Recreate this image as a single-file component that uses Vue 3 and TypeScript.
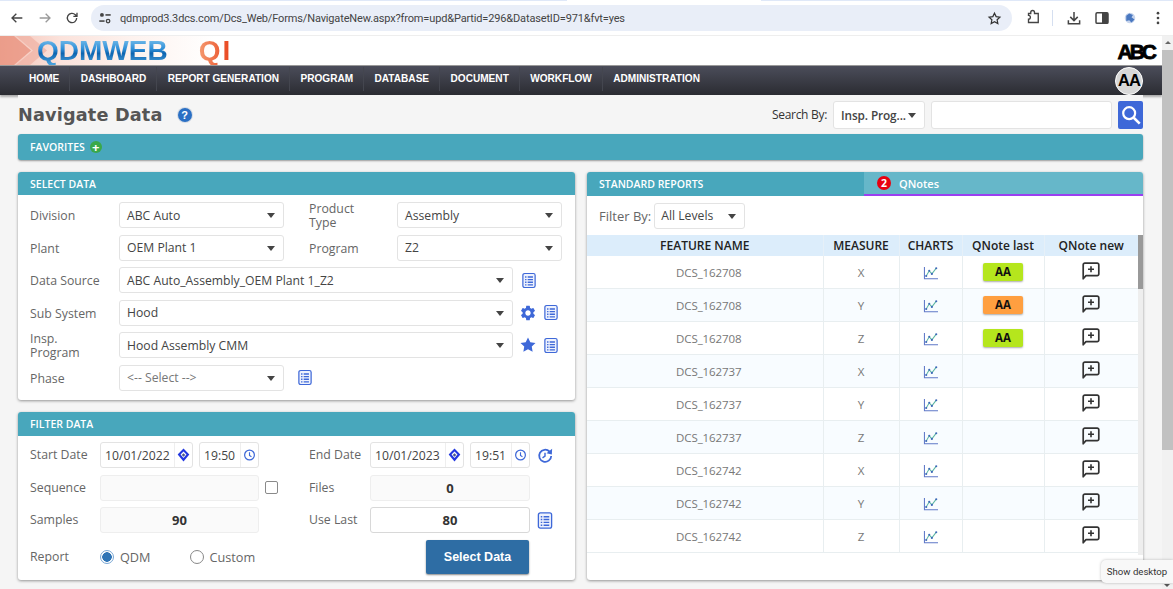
<script setup lang="ts">
interface Row {
  name: string
  measure: string
  last: string
}

const navItems = ['HOME', 'DASHBOARD', 'REPORT GENERATION', 'PROGRAM', 'DATABASE', 'DOCUMENT', 'WORKFLOW', 'ADMINISTRATION']

const rows: Row[] = [
  { name: 'DCS_162708', measure: 'X', last: 'lime' },
  { name: 'DCS_162708', measure: 'Y', last: 'orange' },
  { name: 'DCS_162708', measure: 'Z', last: 'lime' },
  { name: 'DCS_162737', measure: 'X', last: '' },
  { name: 'DCS_162737', measure: 'Y', last: '' },
  { name: 'DCS_162737', measure: 'Z', last: '' },
  { name: 'DCS_162742', measure: 'X', last: '' },
  { name: 'DCS_162742', measure: 'Y', last: '' },
  { name: 'DCS_162742', measure: 'Z', last: '' }
]
</script>

<template>
  <div class="app">
    <svg class="defs" width="0" height="0">
      <symbol id="i-list" viewBox="0 0 16 18">
        <rect x="1" y="1" width="14" height="16" rx="2" fill="#eef2fd" stroke="#3e68d8" stroke-width="1.4" />
        <path d="M3.500 5h1.600M3.500 8h1.600M3.500 11h1.600M3.500 14h1.600M6.500 5h6M6.500 8h6M6.500 11h6M6.500 14h6" stroke="#3e68d8" stroke-width="1.500" fill="none" />
      </symbol>
      <symbol id="i-gear" viewBox="0 0 24 24">
        <path fill="#3e68d8" d="M19.14 12.94c.04-.3.06-.61.06-.94 0-.32-.02-.64-.07-.94l2.03-1.58a.49.49 0 0 0 .12-.61l-1.92-3.32a.488.488 0 0 0-.59-.22l-2.39.96c-.5-.38-1.03-.7-1.62-.94l-.36-2.54a.484.484 0 0 0-.48-.41h-3.84c-.24 0-.43.17-.47.41l-.36 2.54c-.59.24-1.13.57-1.62.94l-2.39-.96c-.22-.08-.47 0-.59.22L2.74 8.87c-.12.21-.08.47.12.61l2.03 1.58c-.05.3-.09.63-.09.94s.02.64.07.94l-2.03 1.58a.49.49 0 0 0-.12.61l1.92 3.32c.12.22.37.29.59.22l2.39-.96c.5.38 1.03.7 1.62.94l.36 2.54c.05.24.24.41.48.41h3.84c.24 0 .44-.17.47-.41l.36-2.54c.59-.24 1.13-.56 1.62-.94l2.39.96c.22.08.47 0 .59-.22l1.92-3.32c.12-.22.07-.47-.12-.61l-2.01-1.58zM12 15.6c-1.98 0-3.6-1.62-3.6-3.6s1.62-3.6 3.6-3.6 3.6 1.62 3.6 3.6-1.62 3.6-3.6 3.6z" />
      </symbol>
      <symbol id="i-star" viewBox="0 0 24 24">
        <path fill="#3e68d8" d="M12 2l3.09 6.26L22 9.27l-5 4.87 1.18 6.88L12 17.77l-6.18 3.25L7 14.14 2 9.27l6.91-1.01z" />
      </symbol>
      <symbol id="i-clock" viewBox="0 0 16 16">
        <circle cx="8" cy="8" r="6" fill="none" stroke="#3e68d8" stroke-width="1.500" />
        <path d="M8 4.500V8.500l2.400 1.600" fill="none" stroke="#3e68d8" stroke-width="1.400" />
      </symbol>
      <symbol id="i-spin" viewBox="0 0 16 18">
        <path d="M8 .5l7.500 8-7.500 9-7.500-9z" fill="#2338e0" />
        <path d="M8 4.500l3.800 4-3.800 4.500-3.800-4.500z" fill="#fff" />
        <path d="M5.800 9l2.200-2.200L10.300 9 8 11.400z" fill="#4a5a88" />
      </symbol>
      <symbol id="i-history" viewBox="0 0 18 18">
        <path d="M14 4.500A6.800 6.800 0 1 0 16 9.500" fill="none" stroke="#3e68d8" stroke-width="2" />
        <path d="M17 1.500l-.3 6.500-6-1.500z" fill="#3e68d8" />
        <path d="M9 5.800v4L6.200 11.600" fill="none" stroke="#3e68d8" stroke-width="1.600" />
      </symbol>
      <symbol id="i-chart" viewBox="0 0 18 16">
        <path d="M1.500 1v13.500H17" fill="none" stroke="#5f78c8" stroke-width="1.200" />
        <path d="M3.500 11.500L7 5.500l3 3.500 5-6.500" fill="none" stroke="#5fb8a4" stroke-width="1.200" />
        <circle cx="3.500" cy="11.500" r="1.200" fill="#3e68b8" />
        <circle cx="7" cy="5.500" r="1.200" fill="#3e68b8" />
        <circle cx="10" cy="9" r="1.200" fill="#3e68b8" />
        <circle cx="15" cy="2.500" r="1.200" fill="#3e68b8" />
      </symbol>
      <symbol id="i-note" viewBox="0 0 18 18">
        <path d="M2.800 1.200h12.400a1.600 1.600 0 0 1 1.600 1.600v9.200a1.600 1.600 0 0 1-1.600 1.600H4L1.200 16.800V2.800a1.600 1.600 0 0 1 1.600-1.600z" fill="none" stroke="#333" stroke-width="1.700" stroke-linejoin="round" />
        <path d="M9 4.200v6M6 7.200h6" stroke="#333" stroke-width="1.600" fill="none" />
      </symbol>
    </svg>

    <div class="tabline"><span class="tl-a"></span><span class="tl-b"></span></div>
    <header class="browser">
      <svg class="b-icon" viewBox="0 0 24 24"><path d="M20 12H5M11 5.500L4.500 12l6.500 6.500" fill="none" stroke="#444" stroke-width="2" /></svg>
      <svg class="b-icon" viewBox="0 0 24 24"><path d="M4 12h15M13 5.500l6.500 6.500-6.500 6.500" fill="none" stroke="#9a9a9a" stroke-width="2" /></svg>
      <svg class="b-icon" viewBox="0 0 24 24"><path d="M19 12a7 7 0 1 1-2.100-5L19.500 9.500M19.500 4v5.500H14" fill="none" stroke="#444" stroke-width="2" /></svg>
      <div class="pill">
        <svg class="tune" viewBox="0 0 16 16">
          <circle cx="4.500" cy="4.500" r="2.200" fill="#444" /><path d="M8.500 4.500h6" stroke="#444" stroke-width="1.800" />
          <circle cx="11.500" cy="11.500" r="2" fill="none" stroke="#444" stroke-width="1.500" /><path d="M1.500 11.500h6" stroke="#444" stroke-width="1.800" />
        </svg>
        <span class="url">qdmprod3.3dcs.com/Dcs_Web/Forms/NavigateNew.aspx?from=upd&amp;Partid=296&amp;DatasetID=971&amp;fvt=yes</span>
        <svg class="pill-star" viewBox="0 0 24 24"><path d="M12 3.500l2.600 5.500 6 .8-4.400 4.200 1.100 6-5.300-2.900-5.300 2.900 1.100-6L3.400 9.800l6-.8z" fill="none" stroke="#333" stroke-width="2" /></svg>
      </div>
      <div class="b-right">
        <svg class="r-icon" viewBox="0 0 24 24"><path d="M9 5.500a2.500 2.500 0 0 1 5 0V7h5v12H6v-4.500a2.500 2.500 0 0 0 0-5V7h3z" transform="translate(0 -1)" fill="none" stroke="#444" stroke-width="1.800" /></svg>
        <span class="b-sep"></span>
        <svg class="r-icon" viewBox="0 0 24 24"><path d="M12 4v11M7 10.500l5 5 5-5M4.500 15v4.500h15V15" fill="none" stroke="#444" stroke-width="2" /></svg>
        <svg class="r-icon" viewBox="0 0 24 24"><rect x="4" y="5" width="16" height="14" rx="1.500" fill="none" stroke="#444" stroke-width="2" /><rect x="12" y="5" width="8" height="14" fill="#444" /></svg>
        <svg class="r-icon" viewBox="0 0 24 24"><circle cx="12" cy="12" r="7" fill="#c6d4ec" /><path d="M7 9l4-3 5 2-2 3 4 3-4 4-3-3-4 1z" fill="#4a78c0" /></svg>
        <svg class="r-icon" viewBox="0 0 24 24"><circle cx="12" cy="5.500" r="1.800" fill="#444" /><circle cx="12" cy="12" r="1.800" fill="#444" /><circle cx="12" cy="18.500" r="1.800" fill="#444" /></svg>
      </div>
    </header>

    <div class="viewport">
      <div class="site">
        <div class="logo-band">
          <svg class="chevrons" viewBox="0 0 70 29" width="70" height="29">
            <path d="M0 0h14l17 14.500L14 29H0z" fill="#e8907c" opacity=".75" />
            <path d="M16 0h14l17 14.500L30 29H16l17-14.500z" fill="#f0b1a2" opacity=".7" />
          </svg>
          <div class="logo"><span class="logo-a">QDMWEB</span><span class="logo-b">QI</span></div>
          <span class="abc">ABC</span>
        </div>

        <nav class="nav">
          <a v-for="item in navItems" :key="item" class="nav-item">{{ item }}</a>
          <span class="avatar">AA</span>
        </nav>

        <main class="page">
          <div class="title-row">
            <h1>Navigate Data</h1>
            <span class="help">?</span>
            <div class="search">
              <label>Search By:</label>
              <div class="select search-select"><span>Insp. Prog...</span><i class="caret"></i></div>
              <div class="plain search-input"></div>
              <button class="search-btn">
                <svg viewBox="0 0 24 24" width="22" height="22"><circle cx="10" cy="10" r="6.500" fill="none" stroke="#fff" stroke-width="2.400" /><path d="M15 15l6.500 6.500" stroke="#fff" stroke-width="2.800" /></svg>
              </button>
            </div>
          </div>

          <div class="favorites">FAVORITES <span class="plus">+</span></div>

          <div class="panels">
            <div class="left-col">
              <section class="card">
                <div class="card-head">SELECT DATA</div>
                <div class="form select-form">
                  <div class="row">
                    <label class="lbl">Division</label>
                    <div class="select w165"><span>ABC Auto</span><i class="caret"></i></div>
                    <label class="lbl lbl2 tight">Product Type</label>
                    <div class="select w165"><span>Assembly</span><i class="caret"></i></div>
                  </div>
                  <div class="row">
                    <label class="lbl">Plant</label>
                    <div class="select w165"><span>OEM Plant 1</span><i class="caret"></i></div>
                    <label class="lbl lbl2">Program</label>
                    <div class="select w165"><span>Z2</span><i class="caret"></i></div>
                  </div>
                  <div class="row">
                    <label class="lbl">Data Source</label>
                    <div class="select wide"><span>ABC Auto_Assembly_OEM Plant 1_Z2</span><i class="caret"></i></div>
                    <svg class="ico first"><use href="#i-list" /></svg>
                  </div>
                  <div class="row">
                    <label class="lbl">Sub System</label>
                    <div class="select wide"><span>Hood</span><i class="caret"></i></div>
                    <svg class="ico first big"><use href="#i-gear" /></svg>
                    <svg class="ico"><use href="#i-list" /></svg>
                  </div>
                  <div class="row">
                    <label class="lbl insp">Insp. Program</label>
                    <div class="select wide"><span>Hood Assembly CMM</span><i class="caret"></i></div>
                    <svg class="ico first big"><use href="#i-star" /></svg>
                    <svg class="ico"><use href="#i-list" /></svg>
                  </div>
                  <div class="row">
                    <label class="lbl">Phase</label>
                    <div class="select w165 muted"><span>&lt;-- Select --&gt;</span><i class="caret"></i></div>
                    <svg class="ico phase"><use href="#i-list" /></svg>
                  </div>
                </div>
              </section>

              <section class="card">
                <div class="card-head tall">FILTER DATA</div>
                <div class="form filter-form">
                  <div class="row">
                    <label class="lbl flbl">Start Date</label>
                    <div class="plain date"><span>10/01/2022</span><i class="addon"><svg class="mini"><use href="#i-spin" /></svg></i></div>
                    <div class="plain time"><span>19:50</span><i class="addon"><svg class="mini"><use href="#i-clock" /></svg></i></div>
                    <label class="lbl flbl2">End Date</label>
                    <div class="plain date"><span>10/01/2023</span><i class="addon"><svg class="mini"><use href="#i-spin" /></svg></i></div>
                    <div class="plain time"><span>19:51</span><i class="addon"><svg class="mini"><use href="#i-clock" /></svg></i></div>
                    <svg class="ico hist"><use href="#i-history" /></svg>
                  </div>
                  <div class="row">
                    <label class="lbl flbl">Sequence</label>
                    <div class="plain field off"></div>
                    <input class="check" type="checkbox" />
                    <label class="lbl flbl2 after-check">Files</label>
                    <div class="plain field off num">0</div>
                  </div>
                  <div class="row">
                    <label class="lbl flbl">Samples</label>
                    <div class="plain field off num">90</div>
                    <label class="lbl flbl2">Use Last</label>
                    <div class="plain field num strong">80</div>
                    <svg class="ico hist"><use href="#i-list" /></svg>
                  </div>
                  <div class="row report-row">
                    <label class="lbl flbl">Report</label>
                    <label class="radio first-radio"><input type="radio" name="rep" checked /> QDM</label>
                    <label class="radio"><input type="radio" name="rep" /> Custom</label>
                    <button class="primary">Select Data</button>
                  </div>
                </div>
              </section>
            </div>

            <section class="card reports">
              <div class="tabs">
                <div class="tab active">STANDARD REPORTS</div>
                <div class="tab qnotes"><span class="badge">2</span>QNotes</div>
              </div>
              <div class="filter-by">
                <label>Filter By:</label>
                <div class="select levels"><span>All Levels</span><i class="caret"></i></div>
              </div>
              <div class="table-wrap">
                <table>
                  <colgroup>
                    <col class="c-name" /><col class="c-measure" /><col class="c-charts" /><col class="c-last" /><col />
                  </colgroup>
                  <thead>
                    <tr>
                      <th>FEATURE NAME</th>
                      <th>MEASURE</th>
                      <th>CHARTS</th>
                      <th>QNote last</th>
                      <th>QNote new</th>
                    </tr>
                  </thead>
                  <tbody>
                    <tr v-for="(row, i) in rows" :key="i">
                      <td class="name">{{ row.name }}</td>
                      <td>{{ row.measure }}</td>
                      <td><svg class="chart"><use href="#i-chart" /></svg></td>
                      <td><span v-if="row.last" class="aa" :class="row.last">AA</span></td>
                      <td><svg class="note"><use href="#i-note" /></svg></td>
                    </tr>
                  </tbody>
                </table>
                <div class="t-scroll"><span></span></div>
              </div>
            </section>
          </div>
        </main>
      </div>

      <div class="scrollbar">
        <i class="arrow-up"></i>
        <span class="thumb"></span>
      </div>
    </div>

    <div class="tooltip">Show desktop</div>
    <i class="arrow-down"></i>
  </div>
</template>

<style scoped>
.app {
  position: relative;
  width: 1173px;
  height: 589px;
  overflow: hidden;
  background: #fff;
  font-family: "Open Sans", "Noto Sans", sans-serif;
  font-size: 12.300px;
  color: #666;
}
.defs {
  position: absolute;
}

/* browser chrome */
.tabline {
  display: flex;
  justify-content: space-between;
  height: 1px;
}
.tl-a {
  width: 567px;
  background: #dfe8f8;
}
.tl-b {
  width: 412px;
  background: #dfe8f8;
}
.browser {
  display: flex;
  align-items: center;
  height: 34px;
  padding-left: 4px;
  border-bottom: 1px solid #eee;
}
.b-icon {
  width: 16px;
  height: 16px;
  margin: 0 7px 0 5px;
  flex: none;
}
.browser > .b-icon:nth-of-type(2),
.browser > .b-icon:nth-of-type(3) {
  margin-left: 5px;
  margin-right: 6px;
}
.pill {
  display: flex;
  flex: none;
  align-items: center;
  width: 921px;
  height: 26px;
  margin-left: 5px;
  padding: 0 10px 0 7px;
  box-sizing: border-box;
  background: #e9eef8;
  border-radius: 13px;
}
.tune {
  width: 14px;
  height: 14px;
  margin-right: 8px;
}
.url {
  flex: 1;
  font-family: Roboto, sans-serif;
  font-size: 11px;
  letter-spacing: -.15px;
  color: #444;
  white-space: nowrap;
}
.pill-star {
  width: 15px;
  height: 15px;
}
.b-right {
  display: flex;
  align-items: center;
  margin-left: 12px;
  gap: 10px;
}
.r-icon {
  width: 18px;
  height: 18px;
  flex: none;
}
.b-sep {
  width: 1px;
  height: 16px;
  margin-right: 2px;
  background: #d5dff0;
}

/* site */
.viewport {
  display: flex;
  height: 553px;
}
.site {
  width: 1162px;
  flex: none;
  background: #f5f5f5;
}
.logo-band {
  position: relative;
  display: flex;
  align-items: center;
  justify-content: space-between;
  height: 29px;
  padding: 0 5px 0 37px;
  background: linear-gradient(90deg, #f4c2b5 0, #fbe2db 60px, #fdf2ee 130px, #fff 215px);
}
.chevrons {
  position: absolute;
  left: 0;
  top: 0;
}
.logo {
  position: relative;
  display: flex;
  gap: 31px;
  font-family: "Liberation Sans", Arial, sans-serif;
  font-weight: 700;
  font-size: 28px;
  line-height: 29px;
}
.logo-a {
  background: linear-gradient(180deg, #8ccbf0 0, #2f8fd8 45%, #0d64b0 60%, #4ea6e0 100%);
  -webkit-background-clip: text;
  background-clip: text;
  color: transparent;
}
.logo-b {
  letter-spacing: 2px;
  background: linear-gradient(90deg, #f59a70 0, #e8401a 100%);
  -webkit-background-clip: text;
  background-clip: text;
  color: transparent;
}
.abc {
  font-family: "Liberation Sans", Arial, sans-serif;
  font-weight: 700;
  font-size: 21px;
  letter-spacing: -3px;
  color: #000;
  -webkit-text-stroke: .8px #000;
  margin-top: 2px;
  padding-right: 3px;
}
.nav {
  display: flex;
  align-items: center;
  height: 30px;
  padding-left: 18.800px;
  background: linear-gradient(180deg, #4b4d5a 0, #2b2c32 100%);
  border-top: 1px solid #999;
  box-sizing: border-box;
  box-shadow: 0 2px 2px #aaa;
}
.nav-item {
  margin-bottom: 3px;
  padding: 0 10.200px;
  font-family: "Liberation Sans", Arial, sans-serif;
  font-size: 10.100px;
  font-weight: 700;
  line-height: 24px;
  color: #fff;
  border-right: 1px solid #44464f;
  white-space: nowrap;
}
.nav-item:last-of-type {
  border-right: 0;
}
.avatar {
  display: flex;
  align-items: center;
  justify-content: center;
  width: 28px;
  height: 28px;
  margin-left: auto;
  margin-right: 19px;
  border-radius: 50%;
  background: #d8d8d8;
  border: 1px solid #fff;
  box-sizing: border-box;
  font-family: "Liberation Sans", Arial, sans-serif;
  font-weight: 700;
  font-size: 16.500px;
  letter-spacing: -1px;
  color: #000;
}
.page {
  position: relative;
  margin: 0 19px 0 18px;
  height: 494px;
  background: #f5f5f5;
}
.title-row {
  display: flex;
  align-items: center;
  height: 39px;
}
h1 {
  margin: 0;
  font-family: "DejaVu Sans", sans-serif;
  font-size: 17.700px;
  font-weight: 700;
  color: #555;
  letter-spacing: .15px;
}
.help {
  display: flex;
  align-items: center;
  justify-content: center;
  width: 14px;
  height: 14px;
  margin-left: 15px;
  border-radius: 50%;
  background: #2a6fc4;
  box-shadow: 0 0 0 1px #d5dce5;
  font-family: "Liberation Sans", sans-serif;
  font-size: 11px;
  font-weight: 700;
  color: #fff;
}
.search {
  display: flex;
  align-items: center;
  margin-left: auto;
}
.search label {
  margin-right: 6px;
  font-size: 12px;
  letter-spacing: -.3px;
  color: #333;
}
.select {
  position: relative;
  display: flex;
  align-items: center;
  height: 26px;
  padding: 0 7px;
  box-sizing: border-box;
  background: #fff;
  border: 1px solid #e3e3e3;
  border-radius: 3px;
  font-size: 12.200px;
  color: #444;
  white-space: nowrap;
}
.caret {
  position: absolute;
  right: 8px;
  top: 50%;
  margin-top: -2px;
  border: 4px solid transparent;
  border-top: 5px solid #444;
  border-bottom: 0;
}
.search-select {
  width: 92px;
  height: 28px;
  font-size: 11.800px;
  letter-spacing: -.1px;
  font-weight: 600;
}
.plain {
  display: flex;
  align-items: center;
  height: 26px;
  box-sizing: border-box;
  background: #fff;
  border: 1px solid #e3e3e3;
  border-radius: 3px;
}
.search-input {
  width: 181px;
  height: 28px;
  margin-left: 6px;
}
.search-btn {
  display: flex;
  align-items: center;
  justify-content: center;
  width: 25px;
  height: 28px;
  margin-left: 6px;
  padding: 0;
  border: 0;
  border-radius: 2px;
  background: #3e68d8;
}
.favorites {
  display: flex;
  align-items: center;
  gap: 5px;
  height: 26px;
  padding-left: 12px;
  background: #48a7bc;
  border-radius: 3px;
  box-shadow: 0 1px 2px #999;
  font-size: 10.500px;
  font-weight: 600;
  color: #fff;
}
.plus {
  display: flex;
  align-items: center;
  justify-content: center;
  width: 12px;
  height: 12px;
  border-radius: 50%;
  background: #3aa84a;
  font-size: 13px;
  font-weight: 700;
  line-height: 1;
}
.panels {
  display: grid;
  grid-template-columns: 557px 556px;
  gap: 12px;
  margin-top: 12px;
}
.left-col {
  display: flex;
  flex-direction: column;
  gap: 12px;
}
.card {
  background: #fff;
  border-radius: 3px;
  box-shadow: 0 1px 3px rgba(0, 0, 0, .4);
}
.card-head {
  display: flex;
  align-items: center;
  height: 23px;
  padding-left: 12px;
  background: #48a7bc;
  border-radius: 3px 3px 0 0;
  font-size: 10.500px;
  font-weight: 600;
  color: #fff;
}
.card-head.tall {
  height: 24px;
  padding-bottom: 1px;
  box-sizing: border-box;
}
.form {
  display: flex;
  flex-direction: column;
  gap: 6.500px;
  padding-left: 12px;
}
.select-form {
  padding-top: 7px;
  padding-bottom: 9.500px;
}
.select-form .lbl {
  padding-top: 1px;
}
.filter-form {
  padding-top: 6px;
  padding-bottom: 6px;
}
.row {
  display: flex;
  align-items: center;
  height: 26px;
}
.lbl {
  width: 89px;
  flex: none;
  font-size: 12.300px;
  color: #666;
}
.lbl2 {
  width: 88px;
  margin-left: 25px;
}
.lbl.lbl2.tight {
  width: 70px;
  margin-right: 18px;
  line-height: 14px;
}
.lbl.insp {
  width: 70px;
  margin-right: 19px;
  line-height: 14px;
}
.w165 {
  width: 165px;
}
.wide {
  width: 394px;
}
.muted {
  color: #777;
}
.ico {
  width: 14px;
  height: 17px;
  flex: none;
  margin-left: 8px;
}
.ico.first {
  margin-left: 9px;
}
.ico.big {
  width: 18px;
  height: 18px;
  margin-left: 6px;
  margin-right: -1px;
}
.ico.phase {
  margin-left: 14px;
}
.flbl {
  width: 70px;
  margin-top: -1px;
}
.date {
  width: 93px;
  margin-right: 6px;
  justify-content: space-between;
  padding-left: 4px;
  font-size: 12.200px;
  color: #444;
}
.time {
  width: 60px;
  justify-content: space-between;
  padding-left: 4px;
  font-size: 12.200px;
  color: #444;
}
.addon {
  display: flex;
  align-items: center;
  justify-content: center;
  width: 17px;
  height: 100%;
  border-left: 1px solid #eee;
}
.mini {
  width: 13px;
  height: 14px;
}
.flbl2 {
  width: 61px;
  margin-left: 50px;
  margin-top: -1px;
}
.flbl2 + .date {
  width: 94px;
}
.flbl2 ~ .field {
  width: 160px;
}
.ico.hist {
  width: 16px;
  margin-left: 7px;
}
.field {
  width: 159px;
  justify-content: center;
}
.off {
  background: #fafafa;
  border-color: #eee;
}
.num {
  font-size: 13px;
  font-weight: 700;
  color: #333;
}
.strong {
  border-color: #d8d8d8;
  background: #fff;
}
.check {
  appearance: none;
  width: 13px;
  height: 13px;
  margin: 0 0 0 6px;
  border: 1px solid #8a8a8a;
  border-radius: 2px;
  background: #fff;
}
.lbl.after-check {
  margin-left: 31px;
}
.report-row {
  height: 34px;
  margin-top: .500px;
}
.radio {
  display: flex;
  align-items: center;
  gap: 6px;
  font-size: 12.700px;
  color: #666;
}
.first-radio {
  margin-right: 39px;
}
.radio input {
  appearance: none;
  width: 14px;
  height: 14px;
  margin: 0;
  border: 1px solid #888;
  border-radius: 50%;
  background: #fff;
}
.radio input:checked {
  border-color: #7aa7d4;
  background: radial-gradient(circle, #2f74b5 0 4.500px, #fff 5px);
}
.primary {
  width: 103px;
  height: 34px;
  margin-left: auto;
  margin-right: 46px;
  border: 0;
  border-radius: 2px;
  background: #2e6da4;
  box-shadow: 0 1px 2px #888;
  font-family: "Liberation Sans", Arial, sans-serif;
  font-size: 12.500px;
  font-weight: 700;
  color: #fff;
}
.tabs {
  display: flex;
  height: 24px;
  border-radius: 3px 3px 0 0;
  overflow: hidden;
}
.tab {
  display: flex;
  align-items: center;
  box-sizing: border-box;
  font-size: 10.500px;
  font-weight: 600;
  color: #fff;
}
.tab.active {
  width: 277px;
  padding: 0 0 1px 12px;
  background: #48a7bc;
}
.qnotes {
  flex: 1;
  padding-left: 13px;
  background: #66b7c9;
  border-bottom: 2px solid #9b3ff0;
  font-size: 11px;
}
.badge {
  display: flex;
  align-items: center;
  justify-content: center;
  width: 14px;
  height: 14px;
  margin-right: 8px;
  border-radius: 50%;
  background: #e8000f;
  font-size: 10.500px;
  font-weight: 700;
}
.filter-by {
  display: flex;
  align-items: center;
  height: 39px;
  padding-left: 12px;
}
.filter-by label {
  margin-right: 3px;
  font-size: 13px;
  color: #666;
}
.levels {
  width: 91px;
  padding-left: 6px;
}
.table-wrap {
  display: flex;
  height: 320px;
  overflow: hidden;
}
table {
  width: 551px;
  flex: none;
  table-layout: fixed;
  border-collapse: collapse;
  align-self: flex-start;
}
.c-name {
  width: 236px;
}
.c-measure {
  width: 76px;
}
.c-charts {
  width: 63px;
}
.c-last {
  width: 82px;
}
th {
  height: 21px;
  padding: 0;
  background: #dcedfb;
  border-left: 1px solid #e6f0f8;
  font-size: 12px;
  font-weight: 600;
  color: #222;
}
th:first-child,
td:first-child {
  border-left: 0;
}
td {
  height: 31px;
  padding: 1px 0 0;
  text-align: center;
  border-left: 1px solid #e8eef0;
  border-bottom: 1px solid #e8eef0;
  font-size: 11.500px;
  letter-spacing: -.1px;
  color: #777;
}
tbody tr:nth-child(even) td {
  background: #f8fcff;
}
td.name {
  padding-left: 8px;
}
.chart {
  width: 16px;
  height: 14px;
  margin-top: -1px;
  vertical-align: middle;
}
.note {
  width: 18px;
  height: 18px;
  vertical-align: middle;
  margin-top: -5px;
}
.aa {
  display: inline-block;
  width: 40px;
  height: 18px;
  line-height: 18px;
  margin-top: -2px;
  vertical-align: middle;
  border-radius: 2px;
  box-shadow: 0 1px 2px #aaa;
  font-size: 11.500px;
  font-weight: 700;
  letter-spacing: 0;
  color: #111;
}
.lime {
  background: #b5e61d;
}
.orange {
  background: #ff9f40;
}
.t-scroll {
  width: 5px;
  background: #eee;
}
.t-scroll span {
  display: block;
  height: 54px;
  background: #999;
}
.scrollbar {
  position: relative;
  flex: 1;
  background: #f1f1f1;
}
.thumb {
  position: absolute;
  left: 0;
  right: 0;
  top: 14px;
  height: 400px;
  background: #c1c1c1;
}
.arrow-up {
  position: absolute;
  left: 3px;
  top: 5px;
  border: 3px solid transparent;
  border-bottom: 3px solid #666;
  border-top: 0;
}
.tooltip {
  position: absolute;
  left: 1101px;
  top: 560px;
  width: 72px;
  height: 23px;
  line-height: 23px;
  text-align: center;
  background: #f8f8f8;
  border-radius: 5px 0 0 5px;
  box-shadow: 0 0 3px rgba(0, 0, 0, .25);
  font-family: Roboto, sans-serif;
  font-size: 9.600px;
  color: #333;
}
.arrow-down {
  position: absolute;
  left: 1164px;
  top: 584px;
  border: 3px solid transparent;
  border-top: 3px solid #555;
  border-bottom: 0;
}
</style>
